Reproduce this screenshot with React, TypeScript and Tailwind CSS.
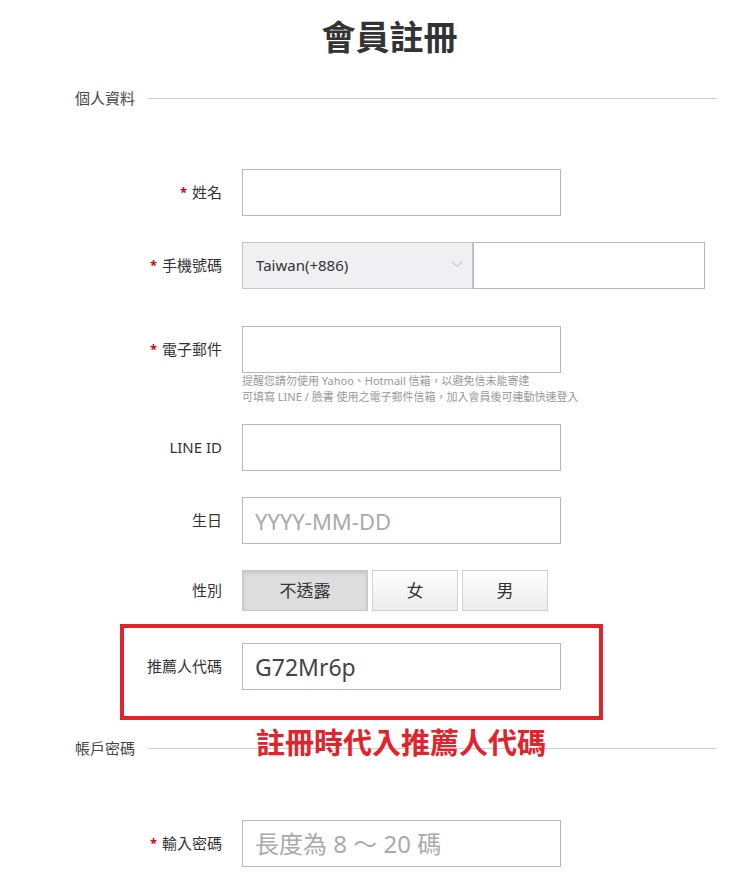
const fontStack = "font-['Noto_Sans','Noto_Sans_CJK_TC',sans-serif]";

function SectionHeader({ title, children }: { title: string; children?: React.ReactNode }) {
  return (
    <div className="relative flex h-[20px] items-center pl-[75px] pr-[32px]">
      <span className="text-[15px] leading-[20px] text-[#444]">{title}</span>
      <span className="ml-[13px] h-px flex-1 bg-[#cfcfcf]" />
      {children}
    </div>
  );
}

function Label({ text, required }: { text: string; required?: boolean }) {
  return (
    <div className="flex w-[222px] shrink-0 items-center justify-end text-[15px] text-[#333]">
      {required && <span className="mr-[5px] text-[13px] font-bold text-[#d0021b]">*</span>}
      <span>{text}</span>
    </div>
  );
}

function TextBox({ placeholder, value, className }: { placeholder?: string; value?: string; className?: string }) {
  return (
    <input
      readOnly
      placeholder={placeholder}
      value={value ?? ""}
      className={`ml-[20px] h-[47px] w-[319px] border border-[#b8b8b8] bg-white px-[12px] text-[22px] text-[#444] outline-none placeholder:text-[#aaa] ${className ?? ""}`}
    />
  );
}

function Row({ children, className }: { children: React.ReactNode; className?: string }) {
  return <div className={`flex h-[47px] items-center ${className ?? ""}`}>{children}</div>;
}

export default function App() {
  return (
    <div className={`min-h-[876px] w-full bg-white ${fontStack}`}>
      <h1 className="pl-[30px] pt-[15px] text-center text-[34px] font-bold leading-[44px] text-[#333]">會員註冊</h1>

      <div className="mt-[29px]">
        <SectionHeader title="個人資料" />
      </div>

      <div className="mt-[61px]">
        <Row>
          <Label text="姓名" required />
          <TextBox />
        </Row>

        <Row className="mt-[26px]">
          <Label text="手機號碼" required />
          <div className="ml-[20px] flex h-[47px] w-[231px] items-center justify-between border border-[#c4c4c4] bg-[#f0f0f2] pl-[13px] pr-[9px]">
            <span className="text-[15px] text-[#333]">Taiwan(+886)</span>
            <svg width="12" height="8" viewBox="0 0 12 8" className="mb-[4px]">
              <polyline points="1,1.5 6,6.5 11,1.5" fill="none" stroke="#b0b0b0" strokeWidth="1" />
            </svg>
          </div>
          <input readOnly className="h-[47px] w-[232px] border border-[#b8b8b8] bg-white outline-none" />
        </Row>

        <Row className="mt-[37px]">
          <Label text="電子郵件" required />
          <TextBox />
        </Row>
        <div className="ml-[242px] text-[11px] leading-[16px] text-[#999]">
          <p>提醒您請勿使用 Yahoo、Hotmail 信箱，以避免信未能寄達</p>
          <p>可填寫 LINE / 臉書 使用之電子郵件信箱，加入會員後可連動快速登入</p>
        </div>

        <Row className="mt-[19px]">
          <Label text="LINE ID" />
          <TextBox />
        </Row>

        <Row className="mt-[26px]">
          <Label text="生日" />
          <TextBox placeholder="YYYY-MM-DD" />
        </Row>

        <div className="mt-[26px] flex h-[41px] items-center">
          <Label text="性別" />
          <div className="ml-[20px] flex gap-[4px] text-[17px] text-[#333]">
            <button className="h-[41px] w-[126px] border border-[#c6c6c6] bg-[#dedede] shadow-[inset_0_2px_4px_rgba(0,0,0,0.12)]">不透露</button>
            <button className="h-[41px] w-[86px] border border-[#d2d2d2] bg-gradient-to-b from-white to-[#ebebeb]">女</button>
            <button className="h-[41px] w-[86px] border border-[#d2d2d2] bg-gradient-to-b from-white to-[#ebebeb]">男</button>
          </div>
        </div>

        <div className="relative mt-[32px]">
          <Row>
            <Label text="推薦人代碼" />
            <TextBox value="G72Mr6p" className="text-[23px]" />
          </Row>
          <div className="pointer-events-none absolute left-[120px] top-[-19px] h-[96px] w-[483px] border-4 border-[#e3232c]" />
        </div>
      </div>

      <div className="mt-[48px]">
        <SectionHeader title="帳戶密碼">
          <span className="absolute left-[256px] top-[-11px] whitespace-nowrap text-[29px] font-bold leading-[32px] text-[#e3232c]">
            註冊時代入推薦人代碼
          </span>
        </SectionHeader>
      </div>

      <Row className="mt-[62px]">
        <Label text="輸入密碼" required />
        <TextBox placeholder="長度為 8 ～ 20 碼" className="text-[24px]" />
      </Row>
    </div>
  );
}
